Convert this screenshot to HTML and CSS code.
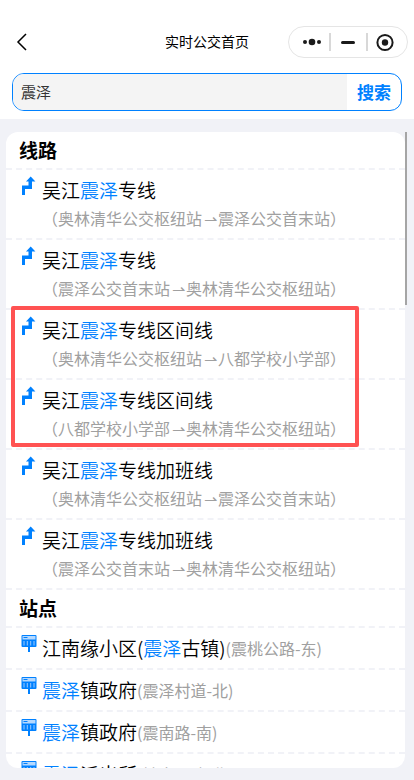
FILE: index.html
```html
<!DOCTYPE html>
<html lang="zh-CN">

<head>
    <meta charset="UTF-8">
    <meta name="viewport" content="width=device-width, initial-scale=1.0">
    <title>实时公交首页</title>
    <link rel="stylesheet" href="styles.css">
</head>

<body>
    <!-- icons shared by the list rows -->
    <svg class="icon-defs" aria-hidden="true">
        <symbol id="icon-line" viewBox="0 0 16 20">
            <path d="M1 19V9.500H7.500V5.500H5L9.700 0.500L14.400 5.500H11V13H4V19Z" fill="#0081ff" />
        </symbol>
        <symbol id="icon-stop" viewBox="0 0 16 20">
            <rect x="0.500" y="1" width="15" height="12" rx="1" fill="#0081ff" />
            <rect x="1.500" y="2" width="13" height="3.500" fill="#b5d9ff" />
            <rect x="2.500" y="3" width="4" height="1" fill="#0081ff" />
            <path d="M3 7V11.500M6.300 7V11.500M9.700 7V11.500M13 7V11.500" stroke="#9bcbff" stroke-width="1" />
            <rect x="7" y="13" width="2" height="5" fill="#0081ff" />
        </symbol>
    </svg>

    <header class="top">
        <div class="nav">
            <button class="back-btn" type="button" aria-label="返回">
                <svg viewBox="0 0 12 18"><path d="M10 1L2 9L10 17" fill="none" stroke="#000" stroke-width="1.500" /></svg>
            </button>
            <h1>实时公交首页</h1>
            <div class="capsule">
                <button type="button" aria-label="更多">
                    <svg viewBox="0 0 20 20" fill="#1a1a1a"><circle cx="3" cy="10" r="2" /><circle cx="10" cy="10" r="3.300" /><circle cx="17" cy="10" r="2" /></svg>
                </button>
                <button type="button" aria-label="最小化">
                    <svg viewBox="0 0 20 20"><path d="M4.500 10.500H15.500" stroke="#1a1a1a" stroke-width="3" stroke-linecap="round" /></svg>
                </button>
                <button type="button" aria-label="关闭">
                    <svg viewBox="0 0 20 20"><circle cx="10" cy="10.500" r="7.600" fill="none" stroke="#1a1a1a" stroke-width="2" /><circle cx="10" cy="10.500" r="3.200" fill="#1a1a1a" /></svg>
                </button>
            </div>
        </div>
        <form class="search">
            <input type="text" id="keyword" aria-label="搜索线路或站点" value="震泽">
            <button type="button">搜索</button>
        </form>
    </header>

    <main class="results">
        <div class="card">
            <h2>线路</h2>
            <ul id="line-list"></ul>
            <h2>站点</h2>
            <ul id="stop-list"></ul>
        </div>
        <div class="scrollbar"></div>
        <div class="mark"></div>
    </main>

    <script src="script.js"></script>
</body>

</html>
```
FILE: styles.css
```css
* {
    box-sizing: border-box;
}

body {
    display: flex;
    flex-direction: column;
    height: 100vh;
    margin: 0;
    background-color: #f1f2f7;
    color: #000;
    font-family: "Noto Sans CJK SC", sans-serif;
    font-weight: 350;
}

button {
    padding: 0;
    border: none;
    background: none;
    font-family: inherit;
    cursor: pointer;
}

h1,
h2,
ul {
    margin: 0;
    padding: 0;
}

.icon-defs {
    position: absolute;
    width: 0;
    height: 0;
}

/* nav bar + search */
.top {
    padding: 26px 12px 8px;
    background-color: #fff;
}

.nav {
    display: grid;
    grid-template-columns: 1fr auto 1fr;
    align-items: center;
    margin-bottom: 15px;
}

.nav h1 {
    padding-bottom: 2px;
    font-size: 14px;
    font-weight: 400;
    line-height: 20px;
}

.back-btn {
    justify-self: start;
    width: 20px;
    height: 20px;
}

.back-btn svg {
    display: block;
    width: 12px;
    height: 18px;
    margin: auto;
}

.capsule {
    display: flex;
    align-items: center;
    justify-self: end;
    width: 120px;
    height: 32px;
    margin-right: -6px;
    border: 1px solid #e5e5e5;
    border-radius: 16px;
}

.capsule button {
    flex: 1;
    height: 18px;
}

.capsule button:first-child {
    padding-left: 6px;
}

.capsule button:last-child {
    padding-right: 5px;
}

.capsule button + button {
    border-left: 2px solid #d8d8d8;
}

.capsule svg {
    display: block;
    width: 20px;
    height: 20px;
    margin: -1px auto;
}

.search {
    display: flex;
    height: 38px;
    border: 1px solid #0081ff;
    border-radius: 12px;
    overflow: hidden;
}

.search input {
    flex: 1;
    min-width: 0;
    padding: 0 8px 2px;
    border: none;
    outline: none;
    background-color: #f4f4f4;
    color: #333;
    font-family: inherit;
    font-size: 15px;
}

.search button {
    width: 54px;
    padding-bottom: 2px;
    color: #0081ff;
    font-size: 17px;
    font-weight: 700;
}

/* result list */
.results {
    position: relative;
    flex: 1;
    min-height: 0;
    margin: 13px 7px 12px 6px;
}

.card {
    height: 100%;
    margin-right: 2px;
    border-radius: 12px;
    background-color: #fff;
    overflow: hidden;
}

.card h2 {
    padding: 0 13px;
    border-bottom: 2px dashed #f1f2f7;
    font-size: 19px;
    font-weight: 700;
    line-height: 36px;
}

.card li {
    display: flex;
    gap: 5px;
    padding: 6px 15px;
    border-bottom: 2px dashed #f1f2f7;
    list-style: none;
}

.card li svg {
    flex: none;
    width: 16px;
    height: 20px;
}

.name {
    font-size: 19px;
    line-height: 28px;
}

.name em {
    color: #0081ff;
    font-style: normal;
}

.route,
.name small {
    color: #a0a0a0;
    font-size: 16px;
    font-weight: 400;
}

.name small {
    line-height: 20px;
    vertical-align: 1px;
}

.route {
    line-height: 28px;
}

.arrow {
    display: inline-block;
    width: 16px;
    text-align: center;
}

.scrollbar {
    position: absolute;
    top: 0;
    right: 0;
    width: 2px;
    height: 173px;
    background-color: #a5a5a5;
}

/* red frame round the short-turn lines */
.mark {
    position: absolute;
    top: 174px;
    left: 5px;
    width: 348px;
    height: 141px;
    border: 4px solid #ff5252;
    border-radius: 2px;
}
```
FILE: script.js
```javascript
var keyword = document.getElementById('keyword').value;

var lines = [
    { name: '吴江震泽专线', from: '奥林清华公交枢纽站', to: '震泽公交首末站' },
    { name: '吴江震泽专线', from: '震泽公交首末站', to: '奥林清华公交枢纽站' },
    { name: '吴江震泽专线区间线', from: '奥林清华公交枢纽站', to: '八都学校小学部' },
    { name: '吴江震泽专线区间线', from: '八都学校小学部', to: '奥林清华公交枢纽站' },
    { name: '吴江震泽专线加班线', from: '奥林清华公交枢纽站', to: '震泽公交首末站' },
    { name: '吴江震泽专线加班线', from: '震泽公交首末站', to: '奥林清华公交枢纽站' }
];

var stops = [
    { name: '江南缘小区(震泽古镇)', road: '震桃公路-东' },
    { name: '震泽镇政府', road: '震泽村道-北' },
    { name: '震泽镇政府', road: '震南路-南' },
    { name: '震泽派出所', road: '镇南一路-北' }
];

function highlight(text) {
    return text.replace(keyword, '<em>' + keyword + '</em>');
}

function icon(id) {
    return '<svg aria-hidden="true"><use href="#' + id + '"/></svg>';
}

document.getElementById('line-list').innerHTML = lines.map(function (line) {
    return '<li>' + icon('icon-line') + '<div><div class="name">' + highlight(line.name) + '</div>' +
        '<div class="route">（' + line.from + '<span class="arrow">⇀</span>' + line.to + '）</div></div></li>';
}).join('');

document.getElementById('stop-list').innerHTML = stops.map(function (stop) {
    return '<li>' + icon('icon-stop') + '<div class="name">' + highlight(stop.name) +
        '<small>(' + stop.road + ')</small></div></li>';
}).join('');
```
